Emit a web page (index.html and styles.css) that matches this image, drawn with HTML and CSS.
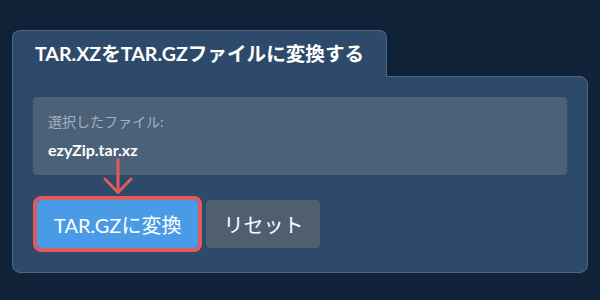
FILE: index.html
```html
<!DOCTYPE html>
<html lang="ja">
<head>
<meta charset="utf-8">
<link rel="stylesheet" href="styles.css">
</head>
<body>
<div class="wrap">
  <div class="tab">TAR.XZをTAR.GZファイルに変換する</div>
  <div class="panel">
    <div class="filebox">
      <div class="label">選択したファイル:</div>
      <div class="filename">ezyZip.tar.xz</div>
    </div>
    <div class="actions">
      <svg class="arrow" width="32" height="38" viewBox="0 0 32 38" fill="none" stroke="#e05b5b" stroke-width="3" stroke-linecap="round" stroke-linejoin="round">
        <path d="M16 1.5 V34"/>
        <path d="M3 21 L16 34.5 L29 21"/>
      </svg>
      <button class="btn btn-convert">TAR.GZに変換</button>
      <button class="btn btn-reset">リセット</button>
    </div>
  </div>
</div>
</body>
</html>
```

FILE: styles.css
```css
html, body {
  margin: 0;
  padding: 0;
  background: #0f2237;
}
body {
  font-family: Lato, "Noto Sans CJK JP", sans-serif;
  color: #ffffff;
}
.wrap {
  margin: 30px 12px 0;
  display: flex;
  flex-direction: column;
  align-items: flex-start;
}
.tab {
  position: relative;
  z-index: 1;
  background: #2d4a6a;
  border: 1px solid #4c6888;
  border-bottom: none;
  border-radius: 8px 8px 0 0;
  padding: 10px 22px 10px 22px;
  margin-bottom: -1px;
  font-size: 19.6px;
  line-height: 26px;
  font-weight: 700;
}
.panel {
  align-self: stretch;
  background: #2d4a6a;
  border: 1px solid #4c6888;
  border-radius: 0 8px 8px 8px;
  padding: 20px 20px 20px 20px;
}
.filebox {
  background: #4b6179;
  border-radius: 4px;
  padding: 15px 15px 14px;
  margin-bottom: 21px;
}
.label {
  font-size: 14px;
  line-height: 20px;
  color: #a5b0bd;
}
.filename {
  margin-top: 7px;
  font-size: 16px;
  line-height: 22px;
  font-weight: 700;
}
.actions {
  position: relative;
  display: flex;
  gap: 8px;
}
.arrow {
  position: absolute;
  left: 69px;
  top: -38px;
}
.btn {
  margin: 4px;
  height: 48px;
  border: none;
  border-radius: 4px;
  padding: 0 17px;
  font-family: Lato, "Noto Sans CJK JP", sans-serif;
  font-size: 20px;
  color: #ffffff;
}
.btn-convert {
  background: #4a9be6;
  outline: 4px solid #de5b5b;
  margin-right: 0;
}
.btn-reset {
  background: #4f5f70;
  margin-left: 0;
}
```
